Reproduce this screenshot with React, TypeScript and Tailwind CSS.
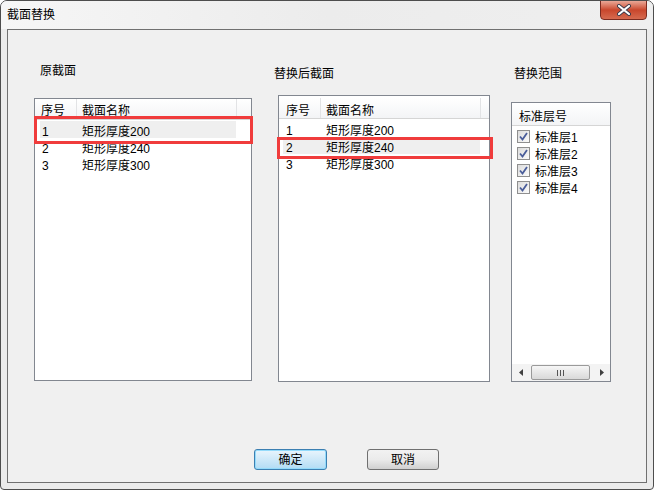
import React from "react";

const FONT = "font-['Liberation_Sans','Noto_Sans_CJK_SC',sans-serif]";

const rows = ["矩形厚度200", "矩形厚度240", "矩形厚度300"];
const floors = ["标准层1", "标准层2", "标准层3", "标准层4"];

/* 复选框 */
const CheckBox = () => (
  <span className="w-[13px] h-[13px] border border-[#8f8f8f] bg-gradient-to-br from-[#dcdcdc] to-[#fbfbfb] flex items-center justify-center">
    <svg width="9" height="9" viewBox="0 0 9 9">
      <path d="M1 4.5 L3.5 7.5 L8 1" fill="none" stroke="#4a5d9a" strokeWidth="1.8" />
    </svg>
  </span>
);

/* 表头 */
const Header = ({ pl1, pt }: { pl1: string; pt: string }) => (
  <div className="flex h-[21px] border-b border-[#d5d5d5] bg-gradient-to-b from-white to-[#f3f4f6]">
    <div className={`w-[42px] border-r border-[#e2e3e5] flex items-center ${pl1} ${pt}`}>序号</div>
    <div className={`w-[160px] border-r border-[#e2e3e5] flex items-center pl-[5px] ${pt}`}>截面名称</div>
    <div className="flex-1" />
  </div>
);

const App: React.FC = () => {
  return (
    <div
      className={`${FONT} text-[12px] text-black w-[654px] h-[490px] relative bg-[#ebebeb] border border-[#4d4d4d] rounded-t-[7px] rounded-b-[4px] overflow-hidden flex flex-col`}
    >
      {/* Title bar */}
      <div className="h-[28px] pl-[6px] flex items-center bg-gradient-to-r from-[#f6f6f6] via-[#ececec] to-[#efefef] text-[12px]">
        截面替换
      </div>

      {/* Close */}
      <div className="absolute top-[-1px] right-[6px] w-[47px] h-[20px] rounded-b-[4px] border border-[#7b2b20] bg-gradient-to-b from-[#e9a797] via-[#c9462c] to-[#d66a4f] flex items-center justify-center">
        <svg width="16" height="12" viewBox="0 0 16 12">
          <path d="M3 2 L13 10 M13 2 L3 10" stroke="#3a3a4a" strokeWidth="4" strokeLinecap="round" />
          <path d="M3 2 L13 10 M13 2 L3 10" stroke="#ffffff" strokeWidth="2.2" strokeLinecap="round" />
        </svg>
      </div>

      {/* Panel */}
      <div className="mx-[6px] mb-[6px] flex-1 border border-[#707070] bg-[#f0f0f0] flex flex-col">
        <div className="flex items-start h-[352px]">
          {/* 原截面 */}
          <div className="ml-[26px] w-[218px] pt-[33px] flex flex-col">
            <div className="h-[16px] leading-[16px] pl-[6px]">原截面</div>
            <div className="relative mt-[19px] h-[283px] border border-[#828790] bg-white">
              <Header pl1="pl-[6px]" pt="pt-[4px]" />
              <div className="pt-[1px]">
                {rows.map((r, i) => (
                  <div
                    key={i}
                    className={`ml-[5px] w-[196px] h-[17px] pt-[5px] flex items-center ${i === 0 ? "bg-[#efefef]" : ""}`}
                  >
                    <span className="w-[42px] pl-[2px]">{i + 1}</span>
                    <span>{r}</span>
                  </div>
                ))}
              </div>
              <div className="absolute left-[-1px] top-[17px] w-[219px] h-[28px] border-[3px] border-[#f03c3c]" />
            </div>
          </div>

          {/* 替换后截面 */}
          <div className="ml-[22px] w-[216px] pt-[36px] flex flex-col">
            <div className="h-[16px] leading-[16px]">替换后截面</div>
            <div className="relative ml-[4px] w-[212px] mt-[13px] h-[287px] border border-[#828790] bg-white">
              <div className="h-[2px]" />
              <Header pl1="pl-[7px]" pt="pt-[6px]" />
              <div className="pt-[1px]">
                {rows.map((r, i) => (
                  <div
                    key={i}
                    className={`ml-[4px] w-[197px] h-[17px] pt-[4px] flex items-center ${i === 1 ? "bg-[#efefef]" : ""}`}
                  >
                    <span className="w-[43px] pl-[3px]">{i + 1}</span>
                    <span>{r}</span>
                  </div>
                ))}
              </div>
              <div className="absolute left-[-2px] top-[41px] w-[216px] h-[22px] border-[3px] border-[#f03c3c]" />
            </div>
          </div>

          {/* 替换范围 */}
          <div className="ml-[21px] w-[100px] pt-[36px] flex flex-col">
            <div className="h-[16px] leading-[16px] pl-[3px]">替换范围</div>
            <div className="mt-[20px] h-[280px] border border-[#828790] bg-white flex flex-col">
              <div className="h-[23px] pt-[6px] pl-[7px] flex items-center border-b border-[#d5d5d5] bg-gradient-to-b from-white to-[#f3f4f6]">
                标准层号
              </div>
              <div className="pt-[2px]">
                {floors.map((f) => (
                  <div key={f} className="h-[17px] pl-[5px] flex items-center gap-[5px]">
                    <CheckBox />
                    <span className="pt-[2px]">{f}</span>
                  </div>
                ))}
              </div>

              {/* Scrollbar */}
              <div className="mt-auto h-[17px] bg-[#f3f3f3] flex items-center">
                <div className="w-[17px] h-full flex items-center justify-center">
                  <svg width="4" height="7" viewBox="0 0 4 7">
                    <path d="M4 0 L0 3.5 L4 7 Z" fill="#404040" />
                  </svg>
                </div>
                <div className="ml-[2px] w-[59px] h-[15px] rounded-[2px] border border-[#9a9a9a] bg-gradient-to-b from-[#f6f6f6] to-[#d9d9d9] flex items-center justify-center gap-[2px]">
                  <span className="w-px h-[6px] bg-[#555]" />
                  <span className="w-px h-[6px] bg-[#555]" />
                  <span className="w-px h-[6px] bg-[#555]" />
                </div>
                <div className="ml-auto w-[17px] h-full flex items-center justify-center">
                  <svg width="4" height="7" viewBox="0 0 4 7">
                    <path d="M0 0 L4 3.5 L0 7 Z" fill="#404040" />
                  </svg>
                </div>
              </div>
            </div>
          </div>
        </div>

        {/* Buttons */}
        <div className="flex mt-[67px]">
          <button className="ml-[246px] w-[73px] h-[21px] rounded-[3px] border border-[#3c7fb1] bg-gradient-to-b from-[#e9f5fd] to-[#b2dcf4] shadow-[inset_0_0_0_1px_#94dbfb] text-[12px] flex items-center justify-center">
            确定
          </button>
          <button className="ml-[40px] w-[72px] h-[21px] rounded-[3px] border border-[#707070] bg-gradient-to-b from-[#f2f2f2] via-[#ebebeb] to-[#d0d0d0] text-[12px] flex items-center justify-center">
            取消
          </button>
        </div>
      </div>
    </div>
  );
};

export default App;
